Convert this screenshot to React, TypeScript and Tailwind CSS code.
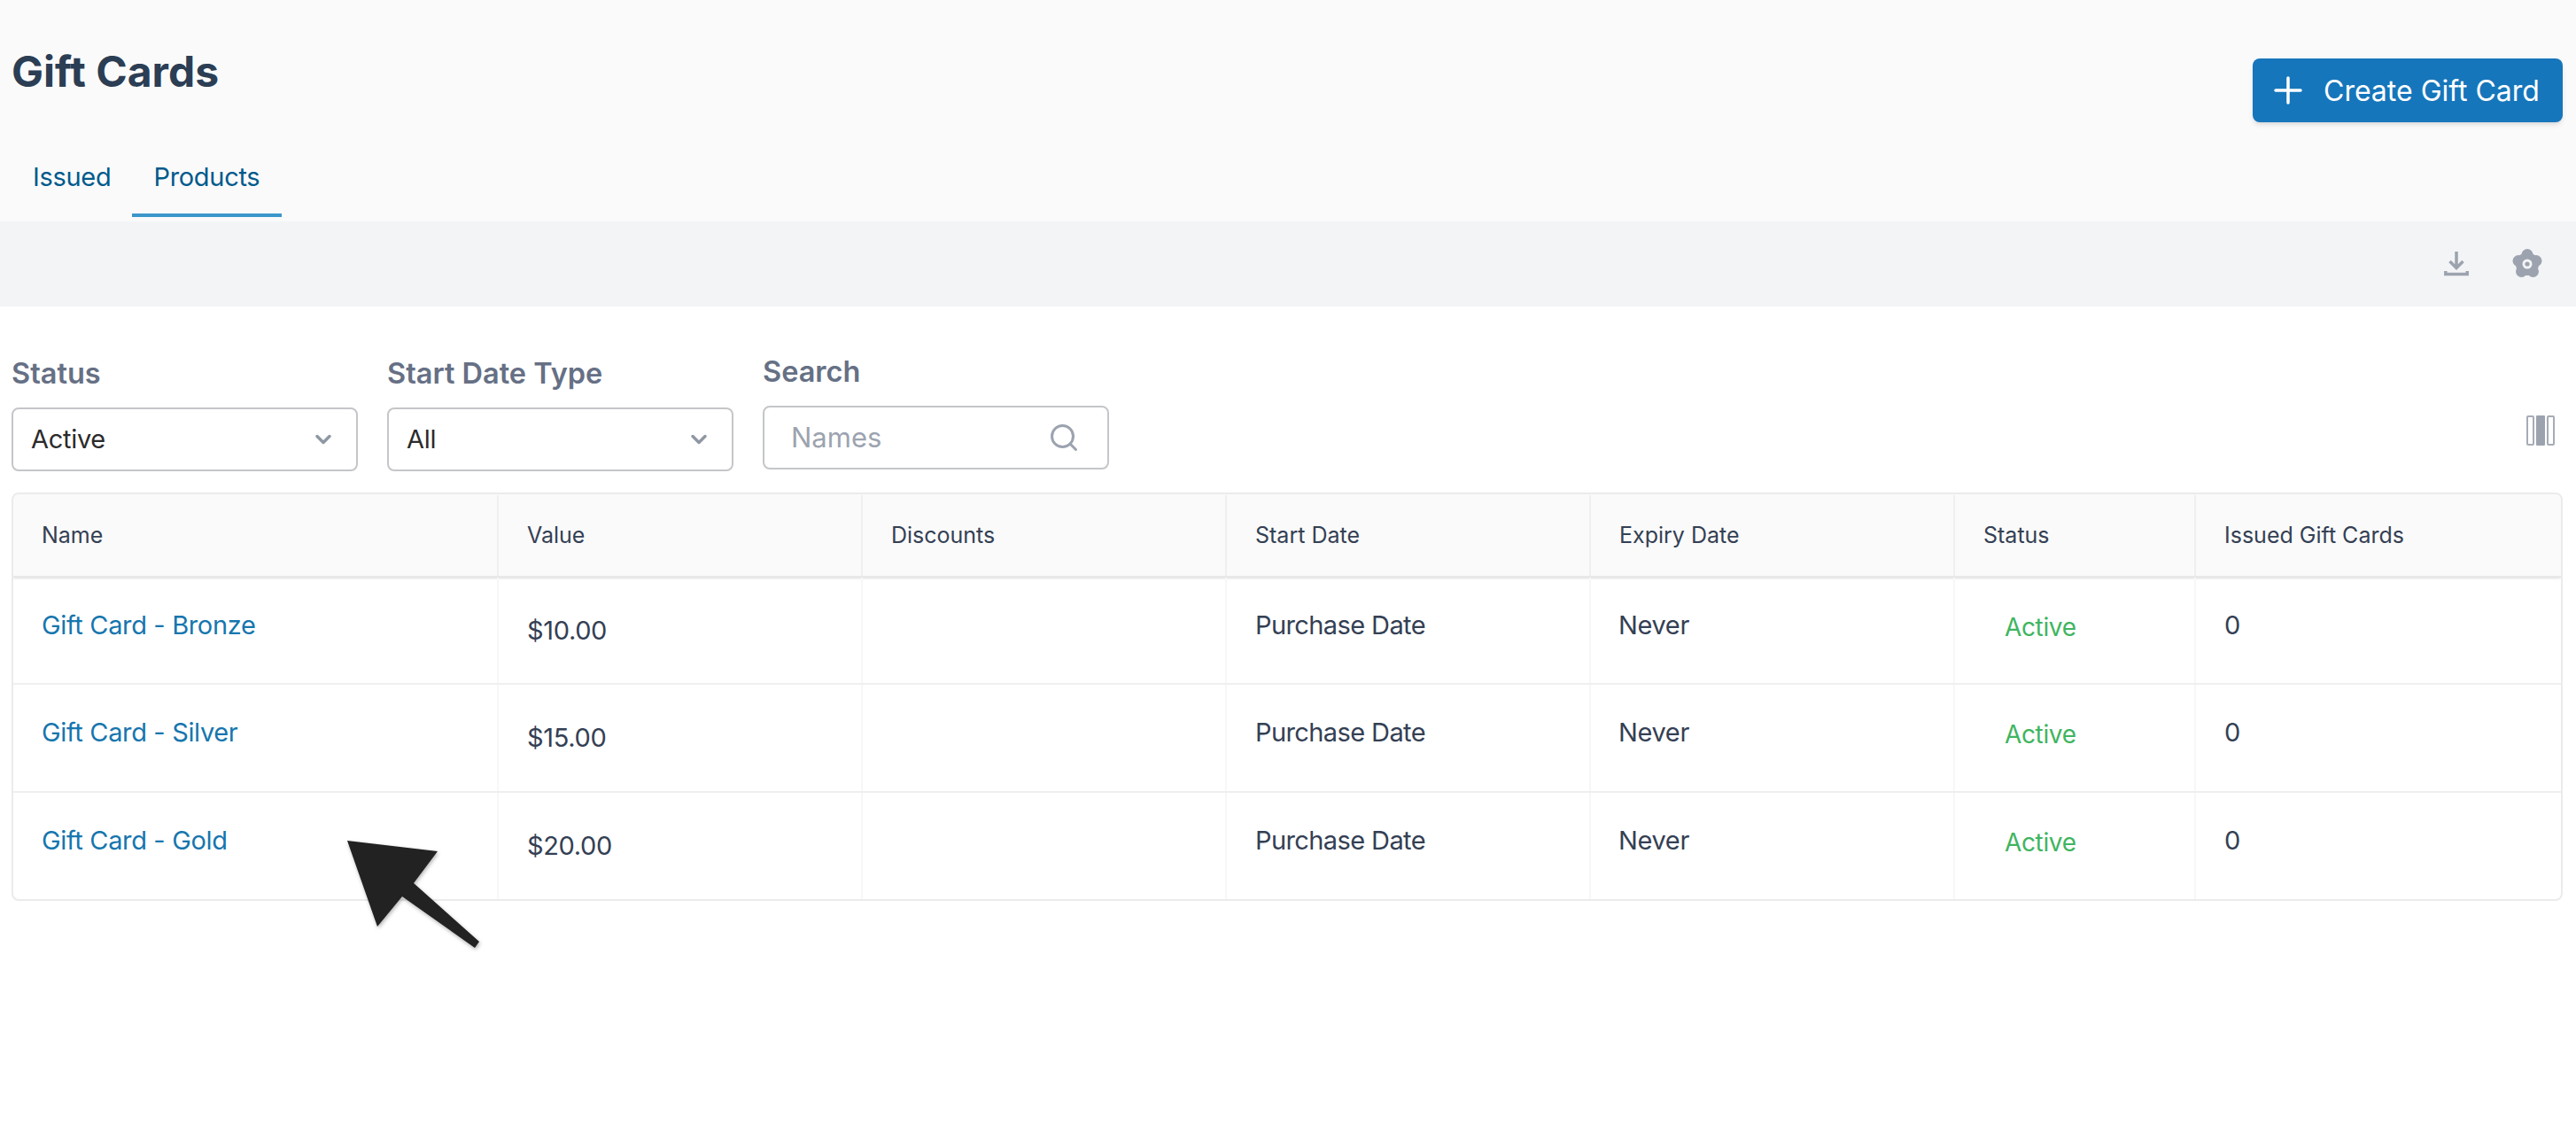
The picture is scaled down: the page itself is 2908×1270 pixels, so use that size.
import { Search, ChevronDown } from 'lucide-react'

const columns = [
  { label: 'Name', width: 'w-[548px]' },
  { label: 'Value', width: 'w-[411px]' },
  { label: 'Discounts', width: 'w-[411px]' },
  { label: 'Start Date', width: 'w-[411px]' },
  { label: 'Expiry Date', width: 'w-[411px]' },
  { label: 'Status', width: 'w-[272px]' },
  { label: 'Issued Gift Cards', width: 'flex-1' },
]

const products = [
  { name: 'Gift Card - Bronze', value: '$10.00', rowHeight: 'h-[121px]' },
  { name: 'Gift Card - Silver', value: '$15.00', rowHeight: 'h-[122px]' },
  { name: 'Gift Card - Gold', value: '$20.00', rowHeight: 'h-[120px]' },
]

function DownloadIcon() {
  return (
    <svg viewBox="0 0 28 30" className="h-[30px] w-[28px] fill-none stroke-[#9ca3af]" strokeWidth="3.5">
      <path d="M14 1v18M6.5 12l7.5 7.5 7.5-7.5" />
      <path d="M1.8 23v3.5h24.4V23" />
    </svg>
  )
}

function GearIcon() {
  return (
    <svg viewBox="0 0 34 34" className="h-[34px] w-[34px]">
      <g className="fill-[#9ca3af]">
        <circle cx="17" cy="6.5" r="6.5" />
        <circle cx="27" cy="13.5" r="6.5" />
        <circle cx="23.5" cy="25.5" r="6.5" />
        <circle cx="10.5" cy="25.5" r="6.5" />
        <circle cx="7" cy="13.5" r="6.5" />
        <circle cx="17" cy="17" r="13" />
      </g>
      <circle cx="17" cy="17" r="5.5" className="fill-[#f3f4f6]" />
      <circle cx="17" cy="17" r="2.6" className="fill-[#9ca3af]" />
    </svg>
  )
}

function SelectFilter({ label, value }: { label: string; value: string }) {
  return (
    <div className="w-[391px]">
      <div className="text-[32.5px] leading-[40px] font-semibold text-[#667085]">{label}</div>
      <div className="mt-[18px] flex h-[72px] items-center justify-between rounded-lg border-2 border-[#c4c6c9] pr-[23px] pl-[20px] text-[29px] tracking-[-0.3px] text-[#2b2b2b]">
        {value}
        <ChevronDown className="h-[28px] w-[28px] text-[#8f97a3]" strokeWidth={3} />
      </div>
    </div>
  )
}

export default function App() {
  return (
    <div className="relative h-[1270px] overflow-hidden bg-white font-['Inter',sans-serif]">
      <header className="h-[250px] bg-[#fafafb] pr-[14px] pl-[13px]">
        <div className="flex items-start justify-between">
          <h1 className="mt-[52px] text-[48px] leading-[58px] font-bold text-[#2b3e54]">Gift Cards</h1>
          <button className="mt-[66px] mr-[1px] flex h-[72px] w-[350px] items-center rounded-lg bg-[#1676bb] pl-[24px] text-[32px] text-white shadow-md">
            <svg viewBox="0 0 32 32" className="h-[32px] w-[32px] fill-none stroke-white" strokeWidth="3.5" strokeLinecap="round">
              <path d="M16 2v28M2 16h28" />
            </svg>
            <span className="mt-[1px] ml-[24px]">Create Gift Card</span>
          </button>
        </div>
        <nav className="mt-[23px] flex text-[29px] leading-[36px] tracking-[-0.3px] text-[#005a8c]">
          <span className="pt-[21px] pr-[24px] pl-[24px]">Issued</span>
          <span className="w-[169px] border-b-4 border-[#3b96cb] pt-[21px] pb-[23px] pl-[24px]">Products</span>
        </nav>
      </header>

      <div className="flex h-[96px] items-center justify-end gap-[49px] bg-[#f3f4f6] pr-[38px]">
        <DownloadIcon />
        <GearIcon />
      </div>

      <div className="pt-[56px] pr-[15px] pl-[13px]">
        <div className="flex items-start gap-[33px]">
          <SelectFilter label="Status" value="Active" />
          <SelectFilter label="Start Date Type" value="All" />
          <div className="-mt-[2px] w-[391px]">
            <div className="text-[32.5px] leading-[40px] font-semibold text-[#667085]">Search</div>
            <div className="mt-[18px] flex h-[72px] items-center justify-between rounded-lg border-2 border-[#c4c6c9] pr-[31px] pl-[30px] text-[31px] text-[#9ca3af]">
              <span className="mt-[1px]">Names</span>
              <Search className="h-[36px] w-[36px]" strokeWidth={2} />
            </div>
          </div>
          <svg viewBox="0 0 33 34" className="mt-[67px] mr-[8px] ml-auto h-[34px] w-[33px] fill-none stroke-[#a6acb6]" strokeWidth="2">
            <rect x="1" y="1" width="7" height="32" rx="1" />
            <rect x="11" y="0" width="10" height="34" rx="1" className="fill-[#9ca3af] stroke-none" />
            <rect x="24" y="1" width="7" height="32" rx="1" />
          </svg>
        </div>

        <div className="mt-[24px] overflow-hidden rounded-lg border-2 border-[#ebebeb]">
          <div className="flex h-[94px] border-b-2 border-[#e8e8e8] bg-[#fafafa] pt-[1px] shadow-sm">
            {columns.map((col) => (
              <div
                key={col.label}
                className={`flex items-center border-r-2 border-[#efefef] pl-[32px] text-[25px] text-[#344054] last:border-r-0 ${col.width}`}
              >
                {col.label}
              </div>
            ))}
          </div>
          {products.map((product) => (
            <div
              key={product.name}
              className={`flex border-b-2 border-[#efefef] text-[29px] tracking-[-0.35px] text-[#344054] last:border-b-0 ${product.rowHeight}`}
            >
              <div className="w-[548px] border-r-2 border-[#f7f7f7] pt-[32px] pl-[32px] text-[#1676ae]">{product.name}</div>
              <div className="w-[411px] border-r-2 border-[#f7f7f7] pt-[38px] pl-[32px]">{product.value}</div>
              <div className="w-[411px] border-r-2 border-[#f7f7f7]" />
              <div className="w-[411px] border-r-2 border-[#f7f7f7] pt-[32px] pl-[32px] tracking-[-0.6px]">Purchase Date</div>
              <div className="w-[411px] border-r-2 border-[#f7f7f7] pt-[32px] pl-[31px]">Never</div>
              <div className="w-[272px] border-r-2 border-[#f7f7f7] pt-[35px] pl-[56px] text-[28px] text-[#3fb55f]">Active</div>
              <div className="flex-1 pt-[32px] pl-[32px]">0</div>
            </div>
          ))}
        </div>
      </div>

      {/* pointer drawn over the screenshot */}
      <svg viewBox="0 0 2908 1270" className="pointer-events-none absolute inset-0 h-full w-full drop-shadow-[1px_2px_2px_rgba(0,0,0,0.3)]">
        <path d="M392 949L494 961L467 997L541 1063L536 1070L454 1012L426 1046Z" fill="#222222" />
      </svg>
    </div>
  )
}
